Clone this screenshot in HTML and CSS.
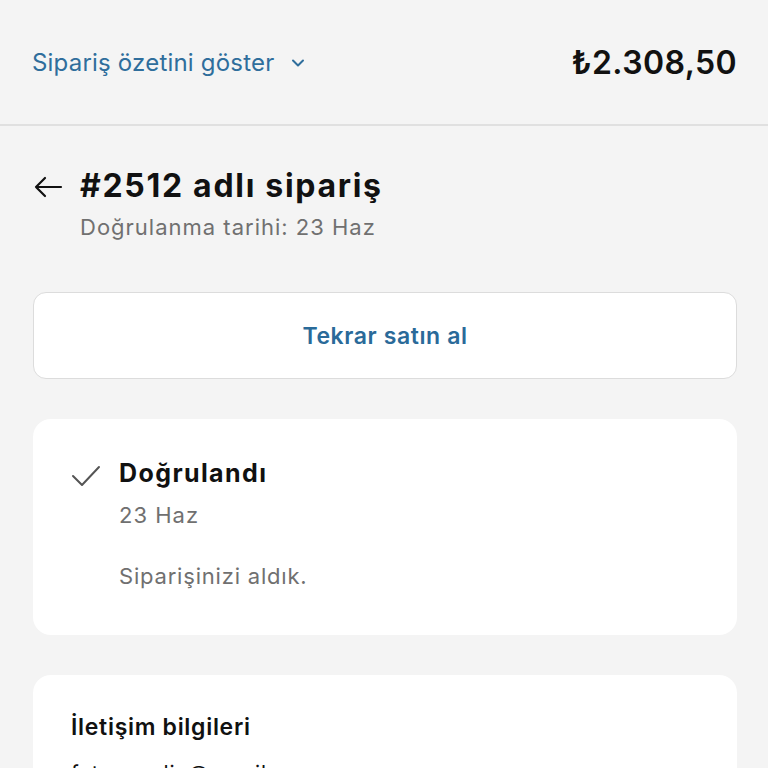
FILE: index.html
```html
<!DOCTYPE html>
<html lang="tr">
<head>
<meta charset="utf-8">
<link rel="stylesheet" href="styles.css">
</head>
<body>
<header class="summary-bar">
  <button class="summary-toggle">
    <span>Sipariş özetini göster</span>
    <svg class="chev" width="14" height="10" viewBox="0 0 14 10"><path d="M2 2.5 L7 7.5 L12 2.5" fill="none" stroke="#2f6e9c" stroke-width="2" stroke-linecap="round" stroke-linejoin="round"/></svg>
  </button>
  <div class="total">₺2.308,50</div>
</header>
<main class="content">
  <div class="order-head">
    <svg class="back" width="30" height="24" viewBox="0 0 30 24"><path d="M28 12 H3 M12 3 L3 12 L12 21" fill="none" stroke="#111" stroke-width="2.2" stroke-linecap="round" stroke-linejoin="round"/></svg>
    <div class="order-titles">
      <h1 class="order-title">#2512 adlı sipariş</h1>
      <div class="order-sub">Doğrulanma tarihi: 23 Haz</div>
    </div>
  </div>
  <button class="rebuy">Tekrar satın al</button>
  <section class="card status">
    <svg class="check" width="30" height="22" viewBox="0 0 30 22"><path d="M2 11 L11 20 L28 2" fill="none" stroke="#555" stroke-width="2" stroke-linecap="round" stroke-linejoin="round"/></svg>
    <div class="status-body">
      <div class="status-title">Doğrulandı</div>
      <div class="status-date">23 Haz</div>
      <div class="status-msg">Siparişinizi aldık.</div>
    </div>
  </section>
  <section class="card contact">
    <h2 class="contact-title">İletişim bilgileri</h2>
    <div class="contact-line">fatmaaydin@gmail.com</div>
  </section>
</main>
</body>
</html>
```
FILE: styles.css
```css
* { box-sizing: border-box; }
html, body { margin: 0; padding: 0; }
body {
  background: #f4f4f4;
  font-family: Inter, "Noto Sans", sans-serif;
  color: #111;
  height: 768px;
  overflow: hidden;
}
.summary-bar {
  height: 126px;
  border-bottom: 2px solid #e0e0e0;
  display: flex;
  align-items: center;
  justify-content: space-between;
  padding: 0 31px 0 32px;
}
.summary-toggle {
  background: none;
  border: 0;
  padding: 0;
  font: inherit;
  font-size: 24px;
  color: #2f6e9c;
  display: flex;
  align-items: center;
  gap: 17px;
  letter-spacing: 0.2px;
}
.chev { margin-top: 2px; }
.total {
  font-size: 32px;
  font-weight: 600;
  letter-spacing: 0.4px;
}
.content {
  padding: 38px 31px 0 33px;
}
.order-head {
  display: flex;
  align-items: flex-start;
  gap: 17px;
}
.back { margin-top: 11px; }
.order-title {
  margin: 0;
  font-size: 32px;
  font-weight: 700;
  letter-spacing: 1.7px;
  line-height: 44px;
}
.order-sub {
  font-size: 22px;
  color: #707070;
  margin-top: 4px;
  line-height: 30px;
  letter-spacing: 1px;
}
.rebuy {
  display: block;
  width: 100%;
  height: 87px;
  margin-top: 50px;
  background: #fff;
  border: 1.5px solid #dcdcdc;
  border-radius: 13px;
  font: inherit;
  font-size: 23px;
  font-weight: 600;
  color: #2a6a99;
  letter-spacing: 0.6px;
}
.card {
  background: #fff;
  border-radius: 18px;
}
.status {
  margin-top: 40px;
  height: 216px;
  padding: 37px 38px 0 38px;
  display: flex;
  gap: 18px;
}
.check { margin-top: 9px; }
.status-title {
  font-size: 25px;
  font-weight: 700;
  line-height: 34px;
  letter-spacing: 1.4px;
}
.status-date {
  font-size: 22px;
  color: #707070;
  margin-top: 12px;
  letter-spacing: 1px;
}
.status-msg {
  font-size: 22px;
  color: #707070;
  margin-top: 35px;
  letter-spacing: 0.8px;
}
.contact {
  margin-top: 40px;
  padding: 36px 38px 0 38px;
  height: 200px;
}
.contact-title {
  margin: 0;
  font-size: 23px;
  font-weight: 600;
  line-height: 32px;
  letter-spacing: 0.7px;
}
.contact-line {
  margin-top: 18px;
  font-size: 21px;
  letter-spacing: 0.8px;
}
```
